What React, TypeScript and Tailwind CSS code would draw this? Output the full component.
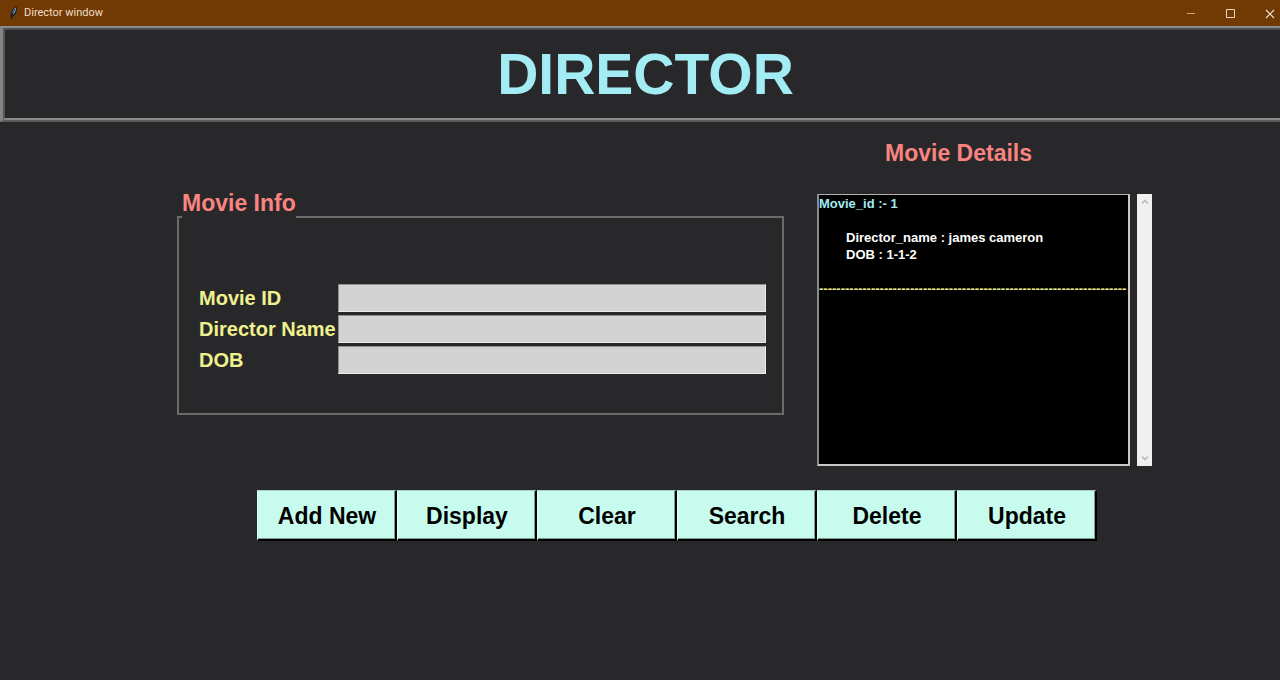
import React from "react";

const fields = [
  { id: "movie-id", label: "Movie ID" },
  { id: "director-name", label: "Director Name" },
  { id: "dob", label: "DOB" },
];

const actions = ["Add New", "Display", "Clear", "Search", "Delete", "Update"];

function TitleBar() {
  return (
    <div className="flex h-[26px] items-center bg-[#713a04] text-[#f3dfc9]">
      <svg className="ml-2 h-4 w-3" viewBox="0 0 12 16" aria-hidden="true">
        <path d="M3 12.500C1.800 8 4.500 2.500 8.500 1.500C9.800 5 8 10 4.500 12Z" fill="#141c2a" />
        <path d="M4.200 9C4.200 6 5.700 3.500 8 2.500C8.500 5 7 8 4.700 10Z" fill="#7d9cc4" />
        <path d="M3 14.500C4 10 5 7 7 4" stroke="#1b1510" strokeWidth="0.8" fill="none" />
      </svg>
      <span className="ml-1 grow font-['Roboto',sans-serif] text-[11px] leading-4">Director window</span>
      <button type="button" aria-label="Minimize" className="flex h-full w-10 items-center justify-center">
        <svg className="h-3 w-3" viewBox="0 0 12 12" aria-hidden="true">
          <path d="M2 6.500H10" stroke="#d0a880" fill="none" />
        </svg>
      </button>
      <button type="button" aria-label="Maximize" className="flex h-full w-[38px] items-center justify-center">
        <svg className="h-3 w-3" viewBox="0 0 12 12" aria-hidden="true">
          <path d="M2.500 2.500H10.500V10.500H2.500Z" stroke="#f0d6ba" fill="none" />
        </svg>
      </button>
      <button type="button" aria-label="Close" className="flex h-full w-[31px] items-center justify-end pr-1">
        <svg className="h-3 w-3" viewBox="0 0 12 12" aria-hidden="true">
          <path d="M2 3L10 11M10 3L2 11" stroke="#f7e6d4" strokeWidth="1.1" fill="none" />
        </svg>
      </button>
    </div>
  );
}

function MovieForm() {
  return (
    <fieldset className="mt-[50px] h-[226px] min-w-0 grow border-2 border-[#6b6b6b] px-4">
      <legend className="-ml-[13px] pb-7 text-[23px] leading-7 font-bold text-[#f98480]">Movie Info</legend>
      <div className="grid grid-cols-[auto_1fr] items-center gap-x-0.5 gap-y-[3px] pt-[39px]">
        {fields.map((field) => (
          <React.Fragment key={field.id}>
            <label htmlFor={field.id} className="pl-1 text-[20px] leading-7 font-bold text-[#eff08e]">
              {field.label}
            </label>
            <input
              id={field.id}
              type="text"
              className="h-7 w-full min-w-0 border border-t-[#8f8f8f] border-r-[#ebebeb] border-b-[#ebebeb] border-l-[#8f8f8f] bg-[#d3d3d3] px-1 text-[16px] text-black outline-none"
            />
          </React.Fragment>
        ))}
      </div>
    </fieldset>
  );
}

function MovieDetails() {
  return (
    <section className="w-[335px] shrink-0">
      <h2 className="ml-[68px] text-[23px] leading-7 font-bold text-[#f98480]">Movie Details</h2>
      <div className="mt-[27px] flex h-[272px] gap-[7px]">
        <div className="min-w-0 grow overflow-hidden border-2 border-t border-t-[#b0b0b0] border-r-[#c8c8c8] border-b-[#c8c8c8] border-l-[#8a8a8a] bg-black text-[13px] leading-[17px] font-bold text-white">
          <p className="text-[#a3ecf4]">Movie_id :- 1</p>
          <p className="mt-[17px] pl-[27px]">Director_name : james cameron</p>
          <p className="pl-[27px]">DOB : 1-1-2</p>
          <p className="mt-[17px] whitespace-nowrap text-[#eff08e]">{"-".repeat(71)}</p>
        </div>
        <div className="flex w-[15px] shrink-0 flex-col justify-between bg-[#f0f0f0]">
          <button type="button" aria-label="Scroll up" className="flex h-4 items-center justify-center">
            <svg className="h-2 w-2" viewBox="0 0 8 8" aria-hidden="true">
              <path d="M1 5.500L4 2.500L7 5.500" stroke="#b9b9b9" strokeWidth="1.600" fill="none" />
            </svg>
          </button>
          <button type="button" aria-label="Scroll down" className="flex h-4 items-center justify-center">
            <svg className="h-2 w-2" viewBox="0 0 8 8" aria-hidden="true">
              <path d="M1 2.500L4 5.500L7 2.500" stroke="#b9b9b9" strokeWidth="1.600" fill="none" />
            </svg>
          </button>
        </div>
      </div>
    </section>
  );
}

export default function App() {
  return (
    <div className="flex min-h-screen flex-col bg-[#28282a] font-['Liberation_Sans',Arial,sans-serif]">
      <TitleBar />
      <header className="border-t-2 border-b-2 border-l-[3px] border-t-[#8c8c8c] border-b-[#5c5c5c] border-l-[#858585]">
        <div className="border-t-2 border-b-2 border-l-2 border-t-[#4a4e52] border-b-[#8a8a8a] border-l-[#575757] py-1">
          <h1 className="pl-1.5 text-center text-[57px] leading-[80px] font-bold text-[#a3ecf4]">DIRECTOR</h1>
        </div>
      </header>
      <main className="pt-[17px]">
        <div className="flex gap-[33px] pr-32 pl-[177px]">
          <MovieForm />
          <MovieDetails />
        </div>
        <div className="mt-6 flex justify-center pl-[73px]">
          {actions.map((action) => (
            <button
              key={action}
              type="button"
              className="h-[51px] w-[140px] border-t border-r-2 border-b-2 border-l border-t-[#a5cfc4] border-r-black border-b-black border-l-[#dcfff5] bg-[#c6fbed] pt-0.5 pl-0.5 text-[23px] leading-7 font-bold text-black shadow-[inset_-1px_-1px_0_#7d9d95]"
            >
              {action}
            </button>
          ))}
        </div>
      </main>
    </div>
  );
}
